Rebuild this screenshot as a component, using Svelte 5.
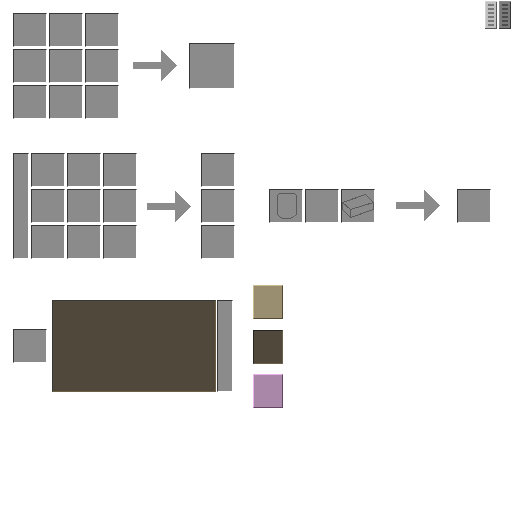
<script>
  const nine = Array.from({ length: 9 });
  const three = Array.from({ length: 3 });
  const notches = [0, 4, 8, 12, 16, 20];
</script>

{#snippet arrow()}
  <svg class="arrow" width="44" height="31" viewBox="0 0 44 31" shape-rendering="crispEdges">
    <path d="M0 12H28V0L44 15.5L28 31V19H0Z" fill="#8b8b8b" />
  </svg>
{/snippet}

{#snippet slot(kind = '')}
  <div class="slot {kind}"></div>
{/snippet}

<main>
  <section class="craft">
    <div class="grid">
      {#each nine as _}{@render slot()}{/each}
    </div>
    <div class="arrow-a">{@render arrow()}</div>
    {@render slot('large')}
    <div class="tabs">
      {#each ['pale', 'deep'] as tone}
        <svg class="tab {tone}" width="12" height="28" viewBox="0 0 12 28" shape-rendering="crispEdges">
          <path class="face" d="M0 0H12V28H0Z" />
          <path class="shine" d="M0 0H12V1H1V28H0Z" />
          <path class="shade" d="M11 1H12V28H0V27H11Z" />
          {#each notches as n}
            <rect class="notch" x="3" y={n + 3} width="6" height="2" />
          {/each}
        </svg>
      {/each}
    </div>
  </section>

  <section class="machine">
    {@render slot('tank')}
    <div class="grid">
      {#each nine as _}{@render slot()}{/each}
    </div>
    <div class="arrow-b">{@render arrow()}</div>
    <div class="stack">
      {#each three as _}{@render slot()}{/each}
    </div>
    <div class="inputs">
      <div class="slot">
        <svg width="32" height="32" viewBox="0 0 32 32" shape-rendering="crispEdges">
          <path d="M9.5 3.5H24.5L26.5 5.5V24.5L24.5 26.5L19.5 28.5H12.5L9.5 26.5L7.5 24.5V5.5Z" />
        </svg>
      </div>
      {@render slot()}
      <div class="slot">
        <svg width="32" height="32" viewBox="0 0 32 32" shape-rendering="crispEdges">
          <path d="M0.5 12.5L23.5 4.5L31.5 12.5V19.5L8.5 27.5L0.5 19.5ZM0.5 12.5L8.5 19.5V27.5M8.5 19.5L31.5 12.5" />
        </svg>
      </div>
    </div>
    <div class="arrow-c">{@render arrow()}</div>
    {@render slot('result')}
  </section>

  <section class="browser">
    {@render slot('single')}
    <div class="panel"></div>
    {@render slot('scroll')}
    <div class="buttons">
      <div class="button tan"></div>
      <div class="button pressed"></div>
      <div class="button pink"></div>
    </div>
  </section>
</main>

<style>
  :global(body) { background: #fff; }
  main {
    box-sizing: border-box;
    width: 512px;
    height: 512px;
    overflow: hidden;
    background: #fff;
    font-family: "Liberation Sans", sans-serif;
  }
  svg { display: block; }
  section { display: flex; align-items: flex-start; box-sizing: border-box; padding-left: 13px; }
  .craft { height: 153px; }
  .craft > .grid { margin-top: 13px; }
  .machine { height: 132px; }
  .grid { display: grid; grid-template-columns: repeat(3, 34px); gap: 2px; }
  .slot {
    box-sizing: border-box;
    flex: none;
    width: 34px;
    height: 34px;
    padding: 1px;
    background:
      linear-gradient(#8b8b8b, #8b8b8b) right top / 1px 1px no-repeat,
      linear-gradient(#8b8b8b, #8b8b8b) left bottom / 1px 1px no-repeat,
      linear-gradient(#373737, #373737) left top / calc(100% - 1px) 1px no-repeat,
      linear-gradient(#373737, #373737) left top / 1px calc(100% - 1px) no-repeat,
      linear-gradient(#8b8b8b, #8b8b8b) left top / calc(100% - 1px) calc(100% - 1px) no-repeat;
  }
  .slot path { fill: none; stroke: #5b5b5b; stroke-width: 1; }
  .large { width: 46px; height: 46px; margin: 43px 0 0 12px; }
  .arrow-a { margin: 50px 0 0 14px; }
  .tabs { display: flex; gap: 2px; margin: 1px 1px 0 auto; }
  .pale .face { fill: #c0c0c0; }
  .pale .shine { fill: #d2d2d2; }
  .pale .shade { fill: #555; }
  .pale .notch { fill: #777; }
  .deep .face { fill: #7b7b7b; }
  .deep .shine { fill: #8b8b8b; }
  .deep .shade { fill: #373737; }
  .deep .notch { fill: #4c4c4c; }
  .tank { width: 16px; height: 106px; margin-right: 2px; }
  .arrow-b { margin: 38px 10px 0 10px; }
  .stack { display: flex; flex-direction: column; gap: 2px; }
  .inputs { display: flex; gap: 2px; margin: 36px 0 0 34px; }
  .arrow-c { margin: 37px 17px 0 21px; }
  .result { margin-top: 36px; }
  .single { margin-top: 44px; }
  .panel {
    box-sizing: border-box;
    width: 164px;
    height: 92px;
    margin: 15px 1px 0 5px;
    background: #50493b;
    border: 1px solid;
    border-color: #373737 #6c6047 #6c6047 #373737;
  }
  .scroll { width: 16px; height: 92px; margin-top: 15px; }
  .buttons { margin-left: 20px; }
  .button { box-sizing: border-box; width: 30px; height: 34px; border: 1px solid; }
  .tan { background: #998e70; border-color: #c9bd8e #57492f #57492f #c9bd8e; }
  .pressed { margin: 11px 0 10px; background: #50493b; border-color: #242420 #6c6047 #6c6047 #242420; }
  .pink { background: #a987a9; border-color: #e9b4e9 #62455f #62455f #e9b4e9; }
</style>
